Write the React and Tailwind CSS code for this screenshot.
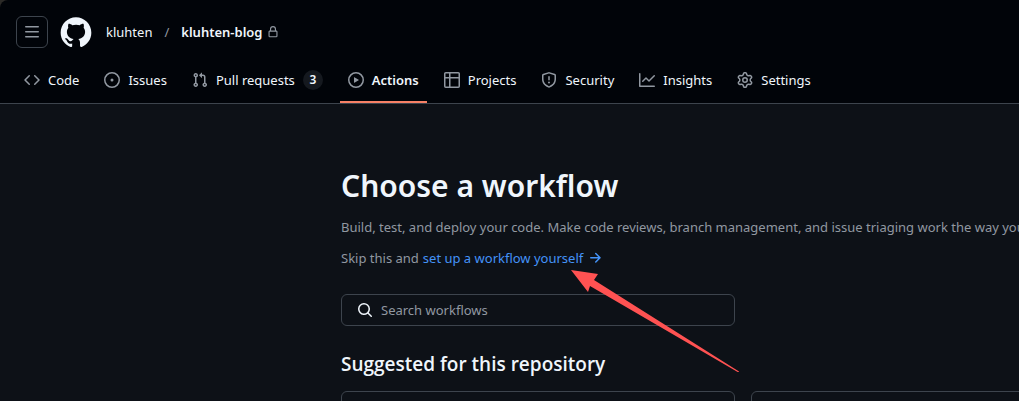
import React, { useState } from "react";

// --- OCTICONS (16px) ---
const ICONS = {
  menu: "M1 2.75A.75.75 0 0 1 1.75 2h12.5a.75.75 0 0 1 0 1.5H1.75A.75.75 0 0 1 1 2.75Zm0 5A.75.75 0 0 1 1.75 7h12.5a.75.75 0 0 1 0 1.5H1.75A.75.75 0 0 1 1 7.75ZM1.75 12h12.5a.75.75 0 0 1 0 1.5H1.75a.75.75 0 0 1 0-1.5Z",
  lock: "M4 4a4 4 0 0 1 8 0v2h.25c.966 0 1.75.784 1.75 1.75v5.5A1.75 1.75 0 0 1 12.25 15h-8.5A1.75 1.75 0 0 1 2 13.25v-5.5C2 6.784 2.784 6 3.75 6H4Zm8.25 3.5h-8.5a.25.25 0 0 0-.25.25v5.5c0 .138.112.25.25.25h8.5a.25.25 0 0 0 .25-.25v-5.5a.25.25 0 0 0-.25-.25ZM10.5 6V4a2.5 2.5 0 1 0-5 0v2Z",
  code: "m11.28 3.22 4.25 4.25a.75.75 0 0 1 0 1.06l-4.25 4.25a.749.749 0 0 1-1.275-.326.749.749 0 0 1 .215-.734L13.94 8l-3.72-3.72a.749.749 0 0 1 .326-1.275.749.749 0 0 1 .734.215Zm-6.56 0a.751.751 0 0 1 1.042.018.751.751 0 0 1 .018 1.042L2.06 8l3.72 3.72a.749.749 0 0 1-.326 1.275.749.749 0 0 1-.734-.215L.47 8.53a.75.75 0 0 1 0-1.06Z",
  issue: "M8 9.5a1.5 1.5 0 1 0 0-3 1.5 1.5 0 0 0 0 3ZM8 0a8 8 0 1 1 0 16A8 8 0 0 1 8 0ZM1.5 8a6.5 6.5 0 1 0 13 0 6.5 6.5 0 0 0-13 0Z",
  pull: "M1.5 3.25a2.25 2.25 0 1 1 3 2.122v5.256a2.251 2.251 0 1 1-1.5 0V5.372A2.25 2.25 0 0 1 1.5 3.25Zm5.677-.177L9.573.677A.25.25 0 0 1 10 .854V2.5h1A2.5 2.5 0 0 1 13.5 5v5.628a2.251 2.251 0 1 1-1.5 0V5a1 1 0 0 0-1-1h-1v1.646a.25.25 0 0 1-.427.177L7.177 3.427a.25.25 0 0 1 0-.354ZM3.75 2.5a.75.75 0 1 0 0 1.5.75.75 0 0 0 0-1.5Zm0 9.5a.75.75 0 1 0 0 1.5.75.75 0 0 0 0-1.5Zm8.25.75a.75.75 0 1 0 1.5 0 .75.75 0 0 0-1.5 0Z",
  play: "M8 0a8 8 0 1 1 0 16A8 8 0 0 1 8 0ZM1.5 8a6.5 6.5 0 1 0 13 0 6.5 6.5 0 0 0-13 0Zm4.879-2.773 4.264 2.559a.25.25 0 0 1 0 .428l-4.264 2.559A.25.25 0 0 1 6 10.559V5.442a.25.25 0 0 1 .379-.215Z",
  table: "M0 1.75C0 .784.784 0 1.75 0h12.5C15.216 0 16 .784 16 1.75v12.5A1.75 1.75 0 0 1 14.25 16H1.75A1.75 1.75 0 0 1 0 14.25ZM6.5 6.5v8h7.75a.25.25 0 0 0 .25-.25V6.5Zm8-1.5V1.75a.25.25 0 0 0-.25-.25H6.5V5Zm-13 1.5v7.75c0 .138.112.25.25.25H5v-8ZM5 5V1.5H1.75a.25.25 0 0 0-.25.25V5Z",
  shield: "M7.467.133a1.748 1.748 0 0 1 1.066 0l5.25 1.68A1.75 1.75 0 0 1 15 3.48V7c0 1.566-.32 3.182-1.303 4.682-.983 1.498-2.585 2.813-5.032 3.855a1.697 1.697 0 0 1-1.33 0c-2.447-1.042-4.049-2.357-5.032-3.855C1.32 10.182 1 8.566 1 7V3.48a1.75 1.75 0 0 1 1.217-1.667Zm.61 1.429a.25.25 0 0 0-.153 0l-5.25 1.68a.25.25 0 0 0-.174.238V7c0 1.358.275 2.666 1.057 3.86.784 1.194 2.121 2.34 4.366 3.297a.196.196 0 0 0 .154 0c2.245-.956 3.582-2.104 4.366-3.298C13.225 9.666 13.5 8.36 13.5 7V3.48a.251.251 0 0 0-.174-.237l-5.25-1.68ZM8.75 4.75v3a.75.75 0 0 1-1.5 0v-3a.75.75 0 0 1 1.5 0ZM9 10.5a1 1 0 1 1-2 0 1 1 0 0 1 2 0Z",
  graph: "M1.5 1.75V13.5h13.75a.75.75 0 0 1 0 1.5H.75a.75.75 0 0 1-.75-.75V1.75a.75.75 0 0 1 1.5 0Zm14.28 2.53-5.25 5.25a.75.75 0 0 1-1.06 0L7 7.06 4.28 9.78a.751.751 0 0 1-1.042-.018.751.751 0 0 1-.018-1.042l3.25-3.25a.75.75 0 0 1 1.06 0L10 7.94l4.72-4.72a.751.751 0 0 1 1.042.018.751.751 0 0 1 .018 1.042Z",
  gear: "M8 0a8.2 8.2 0 0 1 .701.031C9.444.095 9.99.645 10.16 1.29l.288 1.107c.018.066.079.158.212.224.231.114.454.243.668.386.123.082.233.09.299.071l1.103-.303c.644-.176 1.392.021 1.82.63.27.385.506.792.704 1.218.315.675.111 1.422-.364 1.891l-.814.806c-.049.048-.098.147-.088.294.016.257.016.515 0 .772-.01.147.038.246.088.294l.814.806c.475.469.679 1.216.364 1.891a7.977 7.977 0 0 1-.704 1.217c-.428.61-1.176.807-1.82.63l-1.102-.302c-.067-.019-.177-.011-.3.071a5.909 5.909 0 0 1-.668.386c-.133.066-.194.158-.211.224l-.29 1.106c-.168.646-.715 1.196-1.458 1.26a8.006 8.006 0 0 1-1.402 0c-.743-.064-1.289-.614-1.458-1.26l-.289-1.106c-.018-.066-.079-.158-.212-.224a5.738 5.738 0 0 1-.668-.386c-.123-.082-.233-.09-.299-.071l-1.103.303c-.644.176-1.392-.021-1.82-.63a8.12 8.12 0 0 1-.704-1.218c-.315-.675-.111-1.422.363-1.891l.815-.806c.05-.048.098-.147.088-.294a6.214 6.214 0 0 1 0-.772c.01-.147-.038-.246-.088-.294l-.815-.806C.635 6.045.431 5.298.746 4.623a7.92 7.92 0 0 1 .704-1.217c.428-.61 1.176-.807 1.82-.63l1.102.302c.067.019.177.011.3-.071.214-.143.437-.272.668-.386.133-.066.194-.158.211-.224l.29-1.106C6.009.645 6.556.095 7.299.03 7.53.01 7.764 0 8 0Zm-.571 1.525c-.036.003-.108.036-.137.146l-.289 1.105c-.147.561-.549.967-.998 1.189-.173.086-.34.183-.5.29-.417.278-.97.423-1.529.27l-1.103-.303c-.109-.03-.175.016-.195.045-.22.312-.412.644-.573.99-.014.031-.021.11.059.19l.815.806c.411.406.562.957.53 1.456a4.709 4.709 0 0 0 0 .582c.032.499-.119 1.05-.53 1.456l-.815.806c-.081.08-.073.159-.059.19.162.346.353.677.573.989.02.03.085.076.195.046l1.102-.303c.56-.153 1.113-.008 1.53.27.161.107.328.204.501.29.447.222.85.629.997 1.189l.289 1.105c.029.109.101.143.137.146a6.6 6.6 0 0 0 1.142 0c.036-.003.108-.036.137-.146l.289-1.105c.147-.561.549-.967.998-1.189.173-.086.34-.183.5-.29.417-.278.97-.423 1.529-.27l1.103.303c.109.029.175-.016.195-.045.22-.313.411-.644.573-.99.014-.031.021-.11-.059-.19l-.815-.806c-.411-.406-.562-.957-.53-1.456a4.709 4.709 0 0 0 0-.582c-.032-.499.119-1.05.53-1.456l.815-.806c.081-.08.073-.159.059-.19a6.464 6.464 0 0 0-.573-.989c-.02-.03-.085-.076-.195-.046l-1.102.303c-.56.153-1.113.008-1.53-.27a4.44 4.44 0 0 0-.501-.29c-.447-.222-.85-.629-.997-1.189l-.289-1.105c-.029-.11-.101-.143-.137-.146a6.6 6.6 0 0 0-1.142 0ZM11 8a3 3 0 1 1-6 0 3 3 0 0 1 6 0ZM9.5 8a1.5 1.5 0 1 0-3.001.001A1.5 1.5 0 0 0 9.5 8Z",
  search: "M10.68 11.74a6 6 0 0 1-7.922-8.982 6 6 0 0 1 8.982 7.922l3.04 3.04a.749.749 0 0 1-.326 1.275.749.749 0 0 1-.734-.215ZM11.5 7a4.499 4.499 0 1 0-8.997 0A4.499 4.499 0 0 0 11.5 7Z",
  arrow: "M8.22 2.97a.75.75 0 0 1 1.06 0l4.25 4.25a.75.75 0 0 1 0 1.06l-4.25 4.25a.751.751 0 0 1-1.042-.018.751.751 0 0 1-.018-1.042l2.97-2.97H3.75a.75.75 0 0 1 0-1.5h7.44L8.22 4.03a.75.75 0 0 1 0-1.06Z",
};

const Icon = ({ name, className }) => (
  <svg viewBox="0 0 16 16" fill="currentColor" aria-hidden="true" className={`shrink-0 ${className}`}>
    <path d={ICONS[name]} />
  </svg>
);

const GithubMark = () => (
  <svg viewBox="0 0 24 24" fill="currentColor" aria-hidden="true" className="size-8">
    <path d="M10.226 17.284c-2.965-.36-5.054-2.493-5.054-5.256 0-1.123.404-2.336 1.078-3.144-.292-.741-.247-2.314.09-2.965.898-.112 2.111.36 2.83 1.01.853-.269 1.752-.404 2.853-.404 1.1 0 1.999.135 2.807.382.696-.629 1.932-1.1 2.83-.988.315.606.36 2.179.067 2.942.72.854 1.101 2 1.101 3.167 0 2.763-2.089 4.852-5.098 5.234.763.494 1.28 1.572 1.28 2.807v2.336c0 .674.561 1.056 1.235.786 4.066-1.55 7.255-5.615 7.255-10.646C23.5 6.188 18.334 1 11.978 1 5.62 1 .5 6.188.5 12.545c0 4.986 3.167 9.12 7.435 10.669.606.225 1.19-.18 1.19-.786V20.63a2.9 2.9 0 0 1-1.078.224c-1.483 0-2.359-.808-2.987-2.313-.247-.607-.517-.966-1.034-1.033-.27-.023-.359-.135-.359-.27 0-.27.45-.471.898-.471.652 0 1.213.404 1.797 1.235.45.651.921.943 1.483.943.561 0 .92-.202 1.437-.719.382-.381.674-.718.944-.943Z" />
  </svg>
);

const tabs = [
  { name: "Code", icon: "code" },
  { name: "Issues", icon: "issue" },
  { name: "Pull requests", icon: "pull", count: 3 },
  { name: "Actions", icon: "play" },
  { name: "Projects", icon: "table" },
  { name: "Security", icon: "shield" },
  { name: "Insights", icon: "graph" },
  { name: "Settings", icon: "gear" },
];

// --- REPO HEADER ---
const RepoHeader = ({ activeTab }) => (
  <header className="rounded-tl-lg border-b border-[#3d444d] bg-[#010409] text-[#f0f6fc]">
    <div className="flex h-16 items-center pl-4">
      <button aria-label="Open menu" className="flex size-8 items-center justify-center rounded-md border border-[#3d444d] text-[#9198a1]">
        <Icon name="menu" className="size-4" />
      </button>
      <a href="#home" aria-label="Homepage" className="ml-3 rounded-full">
        <GithubMark />
      </a>
      <div className="ml-[14px] flex items-center text-[13px] leading-5">
        <a href="#owner">kluhten</a>
        <span className="px-3 text-[#9198a1]">/</span>
        <a href="#repo" className="font-semibold">kluhten-blog</a>
        <Icon name="lock" className="ml-1 size-3 text-[#9198a1]" />
      </div>
    </div>

    <nav className="flex gap-[9px] pl-4 text-[13px] leading-5">
      {tabs.map((tab) => {
        const isActive = tab.name === activeTab;
        return (
          <a
            key={tab.name}
            href={`#${tab.icon}`}
            aria-current={isActive ? "page" : undefined}
            className={`flex h-[39px] items-start whitespace-nowrap border-b-2 px-2 pt-1.5 ${isActive ? "border-[#f78166] font-semibold" : "border-transparent"}`}
          >
            <span className="flex items-center gap-2">
              <Icon name={tab.icon} className="size-4 text-[#9198a1]" />
              {tab.name}
              {tab.count && (
                <span className="flex size-5 items-center justify-center rounded-full bg-[#15191f] text-xs font-semibold">{tab.count}</span>
              )}
            </span>
          </a>
        );
      })}
    </nav>
  </header>
);

export default function App() {
  const [query, setQuery] = useState("");

  return (
    <div className="overflow-hidden bg-[#2b2a27] font-['Noto_Sans',sans-serif]">
      <RepoHeader activeTab="Actions" />

      <main className="relative min-h-[297px] overflow-hidden bg-[#0d1117] pl-[341px] text-[13px] leading-5 text-[#9198a1]">
        <div className="h-[297px] pt-[58px]">
          <h1 className="text-[30px] font-semibold leading-12 text-[#f0f6fc]">Choose a workflow</h1>
          <p className="mt-[7px] whitespace-nowrap">
            Build, test, and deploy your code. Make code reviews, branch management, and issue triaging work the way you want.
          </p>
          <p className="mt-[11px] flex items-center gap-1">
            Skip this and
            <a href="#new" className="flex items-center gap-1 text-[#4493f8]">
              set up a workflow yourself
              <Icon name="arrow" className="size-4" />
            </a>
          </p>

          <label className="mt-[26px] flex h-8 w-[394px] items-center gap-2 rounded-md border border-[#3d444d] px-[15px]">
            <Icon name="search" className="size-4 text-[#f0f6fc]" />
            <input
              type="text"
              aria-label="Search workflows"
              placeholder="Search workflows"
              value={query}
              onChange={(e) => setQuery(e.target.value)}
              className="min-w-0 flex-1 bg-transparent outline-none placeholder:text-[#9198a1]"
            />
          </label>

          <h2 className="mt-6 font-['Open_Sans',sans-serif] text-[19px] font-semibold leading-7 text-[#f0f6fc]">
            Suggested for this repository
          </h2>
          <div className="mt-[13px] grid w-[804px] grid-cols-2 gap-4">
            <div className="h-40 rounded-md border border-[#3d444d]" />
            <div className="h-40 rounded-md border border-[#3d444d]" />
          </div>
        </div>

        {/* red pointer over the setup link */}
        <svg viewBox="0 0 168 102" fill="#ff5252" aria-hidden="true" className="pointer-events-none absolute left-[571px] top-[166px] h-[102px] w-[168px]">
          <path d="M0 0 27 4 23 10 168 101.500 167.500 102.500 19 16 17 22Z" />
        </svg>
      </main>
    </div>
  );
}
